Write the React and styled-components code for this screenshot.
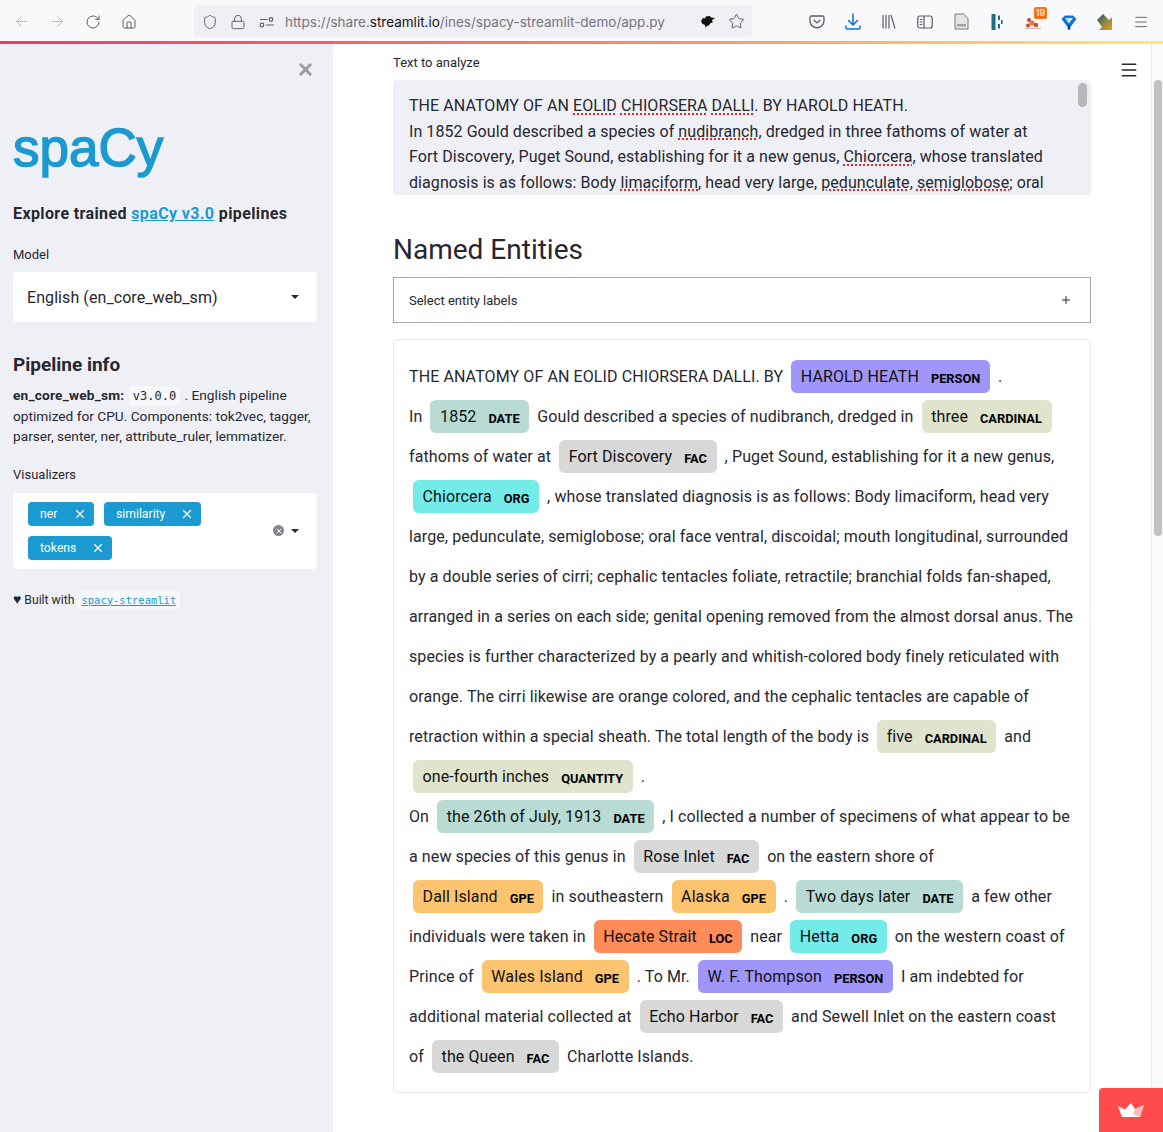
import React from "react";
import styled, { createGlobalStyle } from "styled-components";
import {
  ArrowLeft,
  ArrowRight,
  RotateCw,
  Home,
  Shield,
  Lock,
  Star,
  Menu,
  X,
  Plus,
} from "lucide-react";

const GlobalStyle = createGlobalStyle`
  html, body {
    margin: 0;
    height: 100%;
    overflow: hidden;
    background: #fff;
  }
  body {
    font-family: "Roboto", "Noto Sans", sans-serif;
    color: #262730;
  }
`;

const Page = styled.div`
  display: flex;
  flex-direction: column;
  width: 1163px;
  height: 1132px;
  overflow: hidden;
  position: relative;
`;

// browser chrome
const BrowserBar = styled.div`
  display: flex;
  align-items: center;
  height: 41px;
  flex: none;
  padding: 1px 4px 0 3px;
  box-sizing: border-box;
  background: #f9f9fb;
  color: #5b5b66;
`;

const ToolGroup = styled.div`
  display: flex;
  align-items: center;
`;

const ToolButton = styled.div`
  display: flex;
  align-items: center;
  justify-content: center;
  width: ${(p) => p.$w || 36}px;
  height: 32px;
  padding-top: 1px;
  box-sizing: border-box;
  color: ${(p) => p.$color || "#5b5b66"};
  opacity: ${(p) => (p.$dim ? 0.4 : 1)};
  position: relative;
`;

const UrlBar = styled.div`
  display: flex;
  align-items: center;
  width: 558px;
  height: 32px;
  margin-left: 48px;
  margin-right: 47px;
  padding: 1px 2px 0;
  box-sizing: border-box;
  background: #f0f0f4;
  border-radius: 4px;
  color: #5b5b66;
`;

const UrlIcon = styled.div`
  display: flex;
  align-items: center;
  justify-content: center;
  width: ${(p) => p.$w || 28}px;
  flex: none;
`;

const UrlText = styled.div`
  flex: 1;
  margin-left: 3px;
  font-family: "Inter", sans-serif;
  font-size: 13.5px;
  white-space: nowrap;
  color: #73737d;
  strong {
    font-weight: 400;
    color: #15141a;
  }
`;

const Badge = styled.span`
  position: absolute;
  top: 2px;
  right: 4px;
  padding: 1px 2px;
  background: #f5701f;
  border-radius: 2px;
  color: #fff;
  font-family: "Inter", sans-serif;
  font-size: 9px;
  line-height: 10px;
`;

const GradientLine = styled.div`
  height: 3px;
  flex: none;
  background: linear-gradient(90deg, #f0386b 0%, #f9806c 50%, #ffe96f 100%);
`;

const Body = styled.div`
  display: flex;
  flex: 1;
  min-height: 0;
`;

// sidebar
const Sidebar = styled.aside`
  width: 333px;
  flex: none;
  padding: 0 16px 0 13px;
  box-sizing: border-box;
  background: #eff0f5;
  position: relative;
`;

const CloseButton = styled.div`
  position: absolute;
  top: 16px;
  right: 18px;
  color: #9a9ca1;
  display: flex;
`;

const Logo = styled.div`
  margin-top: 69px;
  height: 70px;
  font-family: "Liberation Sans", sans-serif;
  font-size: 53px;
  line-height: 70px;
  color: #1a9ad1;
  -webkit-text-stroke: 1.5px #1a9ad1;
`;

const Tagline = styled.div`
  margin-top: 19px;
  font-size: 16px;
  line-height: 24px;
  font-weight: 700;
  letter-spacing: 0.38px;
  white-space: nowrap;
`;

const BlueLink = styled.a`
  color: #1a9ad1;
  text-decoration: underline;
`;

const FieldLabel = styled.div`
  font-size: 13px;
  line-height: 18px;
  margin-top: ${(p) => p.$top || 0}px;
  margin-bottom: ${(p) => p.$bottom || 8}px;
`;

const SelectBox = styled.div`
  display: flex;
  align-items: center;
  justify-content: space-between;
  height: 50px;
  padding: 0 18px 0 14px;
  box-sizing: border-box;
  background: #fff;
  border-radius: 4px;
  font-size: 16px;
  letter-spacing: 0.08px;
`;

const Caret = styled.span`
  width: 0;
  height: 0;
  border-left: 4px solid transparent;
  border-right: 4px solid transparent;
  border-top: 4px solid #262730;
`;

const SideHeading = styled.h3`
  margin: 29px 0 0;
  font-size: 19px;
  line-height: 28px;
  font-weight: 700;
`;

const SideText = styled.p`
  margin: 6px 0 0;
  font-size: 13.7px;
  line-height: 20.2px;
  white-space: nowrap;
  b {
    letter-spacing: 0.2px;
  }
`;

const Code = styled.code`
  font-family: "DejaVu Sans Mono", monospace;
  font-size: 12px;
  padding: 3px 4px;
  margin: 0 1px;
  background: #f7f8fa;
  border-radius: 4px;
`;

const MultiBox = styled.div`
  display: flex;
  align-items: center;
  height: 76px;
  padding: 0 18px 0 15px;
  box-sizing: border-box;
  background: #fff;
  border-radius: 4px;
`;

const TagWrap = styled.div`
  flex: 1;
  display: flex;
  flex-wrap: wrap;
  gap: 10px;
  width: 200px;
`;

const Tag = styled.div`
  display: flex;
  align-items: center;
  justify-content: space-between;
  width: ${(p) => p.$w}px;
  height: 24px;
  padding: 0 7px 0 12px;
  box-sizing: border-box;
  background: #1a9ad1;
  border-radius: 4px;
  color: #fff;
  font-size: 12.2px;
`;

const MultiControls = styled.div`
  display: flex;
  align-items: center;
  gap: 7px;
`;

const ClearDot = styled.div`
  display: flex;
  align-items: center;
  justify-content: center;
  width: 11px;
  height: 11px;
  border-radius: 50%;
  background: #808495;
  color: #fff;
`;

const BuiltWith = styled.div`
  margin-top: 20px;
  font-size: 12.2px;
  line-height: 20px;
  white-space: nowrap;
  ${Code} {
    font-size: 10.5px;
    margin-left: 0;
  }
`;

const Heart = styled.span`
  font-size: 14px;
`;

// main column
const Main = styled.main`
  width: 698px;
  flex: none;
  margin-left: 60px;
`;

const TopLabel = styled.div`
  margin-top: 10px;
  font-size: 13px;
  line-height: 18px;
`;

const TextArea = styled.div`
  margin-top: 8px;
  height: 115px;
  overflow: hidden;
  padding: 13px 16px 0;
  box-sizing: border-box;
  background: #eff0f5;
  border-radius: 4px;
  font-size: 16px;
  line-height: 25.6px;
  letter-spacing: 0.07px;
  white-space: nowrap;
  position: relative;
`;

const Spell = styled.span`
  text-decoration: underline dotted #e8232f 2px;
  text-underline-offset: 2px;
`;

const TextAreaThumb = styled.div`
  position: absolute;
  top: 3px;
  right: 4px;
  width: 9px;
  height: 24px;
  border-radius: 5px;
  background: #b8b8b8;
`;

const Heading = styled.h2`
  margin: 34px 0 0;
  font-size: 28px;
  line-height: 42px;
  font-weight: 400;
`;

const LabelPicker = styled.div`
  display: flex;
  align-items: center;
  justify-content: space-between;
  height: 46px;
  margin-top: 6px;
  padding: 0 18px 0 15px;
  box-sizing: border-box;
  border: 1px solid #a3a8b4;
  font-size: 13px;
`;

const EntityBox = styled.div`
  margin-top: 16px;
  padding: 17px 15px 15px;
  border: 1px solid #e6e9ef;
  border-radius: 4px;
`;

const EntityLine = styled.div`
  height: 40px;
  line-height: 40px;
  font-size: 16px;
  letter-spacing: 0.1px;
  white-space: pre;
`;

const Mark = styled.mark`
  background: ${(p) => p.$color};
  color: #111;
  padding: 0.45em 0.6em;
  margin: 0 0.25em;
  line-height: 1;
  border-radius: 0.35em;
`;

const MarkLabel = styled.span`
  font-size: 0.8em;
  font-weight: 700;
  line-height: 1;
  margin-left: 0.75rem;
  letter-spacing: 0;
  color: #000;
  vertical-align: -1px;
`;

const ScrollTrack = styled.div`
  margin-left: auto;
  width: 12px;
  flex: none;
  background: #fafafa;
  border-left: 1px solid #e8e8e8;
  box-sizing: border-box;
  display: flex;
  justify-content: center;
`;

const ScrollThumb = styled.div`
  width: 8px;
  height: 456px;
  margin-top: 36px;
  border-radius: 4px;
  background: #c2c2c2;
`;

const HamburgerButton = styled.div`
  position: absolute;
  top: 60px;
  left: 1119px;
  color: #262730;
  display: flex;
`;

const StreamlitBadge = styled.div`
  position: absolute;
  right: 0;
  bottom: 0;
  width: 64px;
  height: 44px;
  background: #ff4b4b;
  border-radius: 4px 0 0 0;
  display: flex;
  align-items: center;
  justify-content: center;
`;

const colors = {
  DATE: "#b8dcd3",
  FAC: "#d8d8d8",
  ORG: "#73ebe9",
  CARDINAL: "#e0e4cd",
  QUANTITY: "#e0e4cd",
  PERSON: "#a095f8",
  GPE: "#fdc470",
  LOC: "#fe8c5b",
};

// one array per rendered row, so the wrapping stays the same as the reference
const entityLines = [
  ["THE ANATOMY OF AN EOLID CHIORSERA DALLI. BY ", ["HAROLD HEATH", "PERSON"], " ."],
  ["In ", ["1852", "DATE"], " Gould described a species of nudibranch, dredged in ", ["three", "CARDINAL"]],
  ["fathoms of water at ", ["Fort Discovery", "FAC"], " , Puget Sound, establishing for it a new genus,"],
  [["Chiorcera", "ORG"], " , whose translated diagnosis is as follows: Body limaciform, head very"],
  ["large, pedunculate, semiglobose; oral face ventral, discoidal; mouth longitudinal, surrounded"],
  ["by a double series of cirri; cephalic tentacles foliate, retractile; branchial folds fan-shaped,"],
  ["arranged in a series on each side; genital opening removed from the almost dorsal anus. The"],
  ["species is further characterized by a pearly and whitish-colored body finely reticulated with"],
  ["orange. The cirri likewise are orange colored, and the cephalic tentacles are capable of"],
  ["retraction within a special sheath. The total length of the body is ", ["five", "CARDINAL"], " and"],
  [["one-fourth inches", "QUANTITY"], " ."],
  ["On ", ["the 26th of July, 1913", "DATE"], " , I collected a number of specimens of what appear to be"],
  ["a new species of this genus in ", ["Rose Inlet", "FAC"], " on the eastern shore of"],
  [["Dall Island", "GPE"], " in southeastern ", ["Alaska", "GPE"], " . ", ["Two days later", "DATE"], " a few other"],
  ["individuals were taken in ", ["Hecate Strait", "LOC"], " near ", ["Hetta", "ORG"], " on the western coast of"],
  ["Prince of ", ["Wales Island", "GPE"], " . To Mr. ", ["W. F. Thompson", "PERSON"], " I am indebted for"],
  ["additional material collected at ", ["Echo Harbor", "FAC"], " and Sewell Inlet on the eastern coast"],
  ["of ", ["the Queen", "FAC"], " Charlotte Islands."],
];

function PocketIcon() {
  return (
    <svg width="16" height="16" viewBox="0 0 16 16" fill="none" stroke="currentColor" strokeWidth="1.3">
      <path d="M2.3 2h11.4a1.3 1.3 0 0 1 1.3 1.3V7a7 6.8 0 0 1-14 0V3.3A1.3 1.3 0 0 1 2.3 2z" />
      <path d="M5 6.3 8 9l3-2.7" strokeLinecap="round" />
    </svg>
  );
}

function DownloadIcon() {
  return (
    <svg width="16" height="18" viewBox="0 0 16 18" fill="none" stroke="#0a6cf0" strokeWidth="1.5">
      <path d="M8 1v10.5M3.5 7.5 8 12l4.5-4.5" strokeLinecap="round" />
      <path d="M1 12.5v2.2A1.3 1.3 0 0 0 2.3 16h11.4a1.3 1.3 0 0 0 1.3-1.3v-2.2" />
    </svg>
  );
}

function LibraryIcon() {
  return (
    <svg width="14" height="15" viewBox="0 0 14 15" fill="none" stroke="currentColor" strokeWidth="1.2">
      <path d="M1 1v13.5M4 1v13.5M7 1v13.5M9 1l4 13.5" />
    </svg>
  );
}

function PanelIcon() {
  return (
    <svg width="16" height="14" viewBox="0 0 16 14" fill="none" stroke="currentColor" strokeWidth="1.2">
      <rect x="0.8" y="1" width="14.4" height="12" rx="2" />
      <path d="M7 1v12M2.8 4.5h2.4M2.8 7h2.4M2.8 9.5h2.4" />
    </svg>
  );
}

function FileIcon() {
  return (
    <svg width="15" height="17" viewBox="0 0 15 17">
      <path d="M1 1h9l4 4v11H1z" fill="#e4e4e6" stroke="#77777f" />
      <path d="M10 1v4h4z" fill="#cfcfd2" />
      <rect x="3" y="11" width="9" height="2.5" fill="#a3a3a8" />
    </svg>
  );
}

function DashIcon() {
  return (
    <svg width="12" height="16" viewBox="0 0 12 16" fill="#1f6d82">
      <rect x="0.5" y="0" width="4" height="16" rx="0.5" />
      <rect x="7" y="1.5" width="2" height="4.5" />
      <rect x="7" y="10" width="2" height="4.5" />
      <rect x="10" y="6" width="1.6" height="4" />
    </svg>
  );
}

function FoxIcon() {
  return (
    <svg width="16" height="14" viewBox="0 0 16 14" fill="#c8492c">
      <circle cx="4" cy="5" r="2" />
      <circle cx="7" cy="8" r="2.6" fill="#e07a45" />
      <circle cx="3" cy="10.5" r="2" />
      <circle cx="11" cy="10" r="2.2" />
      <path d="M0 13h16v1H0z" fill="#d9b7a8" />
    </svg>
  );
}

function GemIcon() {
  return (
    <svg width="16" height="16" viewBox="0 0 16 16">
      <path d="M0.5 5 4 1.5h8L15.5 5 8 15z" fill="#0f74d8" />
      <path d="M4 4h8l-4 5.5z" fill="#bfe8ff" />
      <path d="M6.5 15 8 9.5 9.500 15 8 16z" fill="#0a3f86" />
    </svg>
  );
}

function ArrowTileIcon() {
  return (
    <svg width="18" height="18" viewBox="0 0 18 18">
      <defs>
        <linearGradient id="tile" x1="0" y1="0" x2="1" y2="1">
          <stop offset="0" stopColor="#1c5070" />
          <stop offset="0.55" stopColor="#8f8a3e" />
          <stop offset="1" stopColor="#f09a1a" />
        </linearGradient>
      </defs>
      <path d="M1 7 7 1l6 6 3-3v13H3l3-3z" fill="url(#tile)" />
    </svg>
  );
}

function BirdIcon() {
  return (
    <svg width="14" height="12" viewBox="0 0 14 12" fill="#111">
      <path d="M0 5 2 2l2 .5L5 .5 9 0l1 1.500 4 .5-3 2 .8 2.500-2.300.5L8 9.500 5.500 10 5 12 3.500 8.500 1.500 8z" />
    </svg>
  );
}

function SettingsIcon() {
  return (
    <svg width="16" height="16" viewBox="0 0 16 16" fill="none" stroke="currentColor" strokeWidth="1.2">
      <path d="M1 5.500h7.500M7 11h8" />
      <circle cx="12" cy="5.500" r="1.800" />
      <circle cx="3" cy="11" r="1.800" />
    </svg>
  );
}

function CrownIcon() {
  return (
    <svg width="26" height="14" viewBox="0 0 26 14">
      <path d="M0 3 7 6.500 13 0l4 6 9-4-4 12H4z" fill="#fff" />
      <path d="M17 6l9-4-4 12-7-3z" fill="#ffb8c0" />
    </svg>
  );
}

function EntityRow({ parts }) {
  return (
    <EntityLine>
      {parts.map((part, i) =>
        typeof part === "string" ? (
          <span key={i}>{part}</span>
        ) : (
          <Mark key={i} $color={colors[part[1]]}>
            {part[0]}
            <MarkLabel>{part[1]}</MarkLabel>
          </Mark>
        )
      )}
    </EntityLine>
  );
}

export default function App() {
  return (
    <Page>
      <GlobalStyle />
      <BrowserBar>
        <ToolGroup>
          <ToolButton $dim><ArrowLeft size={17} strokeWidth={1.4} /></ToolButton>
          <ToolButton $dim><ArrowRight size={17} strokeWidth={1.4} /></ToolButton>
          <ToolButton><RotateCw size={16} strokeWidth={1.5} /></ToolButton>
          <ToolButton $w={35}><Home size={16} strokeWidth={1.5} /></ToolButton>
        </ToolGroup>
        <UrlBar>
          <UrlIcon><Shield size={16} strokeWidth={1.4} /></UrlIcon>
          <UrlIcon><Lock size={16} strokeWidth={1.4} /></UrlIcon>
          <UrlIcon $w={30}><SettingsIcon /></UrlIcon>
          <UrlText>
            https://share.<strong>streamlit.io</strong>/ines/spacy-streamlit-demo/app.py
          </UrlText>
          <UrlIcon><BirdIcon /></UrlIcon>
          <UrlIcon><Star size={17} strokeWidth={1.4} /></UrlIcon>
        </UrlBar>
        <ToolGroup>
          <ToolButton><PocketIcon /></ToolButton>
          <ToolButton><DownloadIcon /></ToolButton>
          <ToolButton><LibraryIcon /></ToolButton>
          <ToolButton><PanelIcon /></ToolButton>
          <ToolButton><FileIcon /></ToolButton>
          <ToolButton><DashIcon /></ToolButton>
          <ToolButton><FoxIcon /><Badge>19</Badge></ToolButton>
          <ToolButton><GemIcon /></ToolButton>
          <ToolButton><ArrowTileIcon /></ToolButton>
          <ToolButton><Menu size={16} strokeWidth={1.4} /></ToolButton>
        </ToolGroup>
      </BrowserBar>
      <GradientLine />
      <Body>
        <Sidebar>
          <CloseButton><X size={19} strokeWidth={3.6} /></CloseButton>
          <Logo>spaCy</Logo>
          <Tagline>
            Explore trained <BlueLink>spaCy v3.0</BlueLink> pipelines
          </Tagline>
          <FieldLabel $top={20} $bottom={8}>Model</FieldLabel>
          <SelectBox>
            English (en_core_web_sm)
            <Caret />
          </SelectBox>
          <SideHeading>Pipeline info</SideHeading>
          <SideText>
            <b>en_core_web_sm:</b> <Code>v3.0.0</Code> . English pipeline
            <br />
            optimized for CPU. Components: tok2vec, tagger,
            <br />
            parser, senter, ner, attribute_ruler, lemmatizer.
          </SideText>
          <FieldLabel $top={19} $bottom={9}>Visualizers</FieldLabel>
          <MultiBox>
            <TagWrap>
              <Tag $w={66}>ner<X size={14} strokeWidth={2.2} /></Tag>
              <Tag $w={97}>similarity<X size={14} strokeWidth={2.2} /></Tag>
              <Tag $w={84}>tokens<X size={14} strokeWidth={2.2} /></Tag>
            </TagWrap>
            <MultiControls>
              <ClearDot><X size={8} strokeWidth={3} /></ClearDot>
              <Caret />
            </MultiControls>
          </MultiBox>
          <BuiltWith>
            <Heart>♥</Heart> Built with <Code><BlueLink>spacy-streamlit</BlueLink></Code>
          </BuiltWith>
        </Sidebar>
        <Main>
          <TopLabel>Text to analyze</TopLabel>
          <TextArea>
            THE ANATOMY OF AN <Spell>EOLID</Spell> <Spell>CHIORSERA</Spell> <Spell>DALLI</Spell>. BY HAROLD HEATH.
            <br />
            In 1852 Gould described a species of <Spell>nudibranch</Spell>, dredged in three fathoms of water at
            <br />
            Fort Discovery, Puget Sound, establishing for it a new genus, <Spell>Chiorcera</Spell>, whose translated
            <br />
            diagnosis is as follows: Body <Spell>limaciform</Spell>, head very large, <Spell>pedunculate</Spell>, <Spell>semiglobose</Spell>; oral
            <TextAreaThumb />
          </TextArea>
          <Heading>Named Entities</Heading>
          <LabelPicker>
            Select entity labels
            <Plus size={12} strokeWidth={2} />
          </LabelPicker>
          <EntityBox>
            {entityLines.map((parts, i) => (
              <EntityRow key={i} parts={parts} />
            ))}
          </EntityBox>
        </Main>
        <ScrollTrack>
          <ScrollThumb />
        </ScrollTrack>
      </Body>
      <HamburgerButton><Menu size={20} strokeWidth={1.8} /></HamburgerButton>
      <StreamlitBadge><CrownIcon /></StreamlitBadge>
    </Page>
  );
}
